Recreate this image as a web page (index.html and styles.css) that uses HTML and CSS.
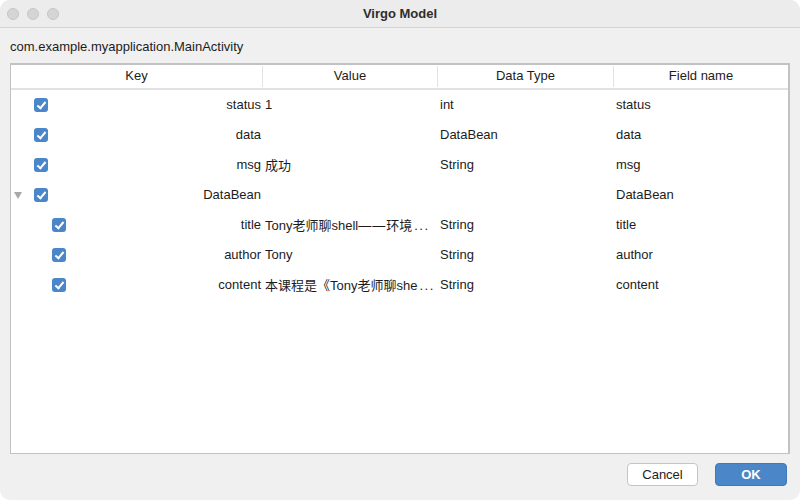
FILE: index.html
```html
<!DOCTYPE html>
<html>
<head>
<meta charset="utf-8">
<link rel="stylesheet" href="styles.css">
</head>
<body>
<div class="window">
  <div class="titlebar">
    <div class="lights"><span class="light"></span><span class="light"></span><span class="light"></span></div>
    <div class="title">Virgo Model</div>
  </div>
  <div class="content">
    <div class="label">com.example.myapplication.MainActivity</div>
    <div class="table">
      <div class="row head">
        <div class="hc">Key</div>
        <div class="hc sep">Value</div>
        <div class="hc sep">Data Type</div>
        <div class="hc sep">Field name</div>
      </div>
      <div class="row">
        <div class="key"><span class="cb"></span><span class="kname">status</span></div>
        <div class="cell">1</div><div class="cell type">int</div><div class="cell field">status</div>
      </div>
      <div class="row">
        <div class="key"><span class="cb"></span><span class="kname">data</span></div>
        <div class="cell"></div><div class="cell type">DataBean</div><div class="cell field">data</div>
      </div>
      <div class="row">
        <div class="key"><span class="cb"></span><span class="kname">msg</span></div>
        <div class="cell">成功</div><div class="cell type">String</div><div class="cell field">msg</div>
      </div>
      <div class="row">
        <div class="key"><span class="arrow"></span><span class="cb"></span><span class="kname">DataBean</span></div>
        <div class="cell"></div><div class="cell type"></div><div class="cell field">DataBean</div>
      </div>
      <div class="row">
        <div class="key nested"><span class="cb"></span><span class="kname">title</span></div>
        <div class="cell">Tony老师聊shell<span class="dash">——</span>环境<span class="ell">...</span></div><div class="cell type">String</div><div class="cell field">title</div>
      </div>
      <div class="row">
        <div class="key nested"><span class="cb"></span><span class="kname">author</span></div>
        <div class="cell">Tony</div><div class="cell type">String</div><div class="cell field">author</div>
      </div>
      <div class="row">
        <div class="key nested"><span class="cb"></span><span class="kname">content</span></div>
        <div class="cell">本课程是《Tony老师聊she<span class="ell">...</span></div><div class="cell type">String</div><div class="cell field">content</div>
      </div>
    </div>
    <div class="footer">
      <button class="btn cancel">Cancel</button>
      <button class="btn ok">OK</button>
    </div>
  </div>
</div>
</body>
</html>
```

FILE: styles.css
```css
* { box-sizing: border-box; }
html, body { margin: 0; padding: 0; background: #ffffff; }
body {
  font-family: "Liberation Sans", Arial, "Noto Sans CJK SC", sans-serif;
  font-size: 13px;
  color: #1c1c1c;
}
.window {
  width: 800px;
  height: 500px;
  background: #f0f0f0;
  border-radius: 10px;
  overflow: hidden;
  display: flex;
  flex-direction: column;
}
.titlebar {
  height: 28px;
  background: #ececec;
  border-bottom: 1px solid #d4d4d4;
  position: relative;
  display: flex;
  align-items: center;
  justify-content: center;
  flex-shrink: 0;
}
.lights {
  position: absolute;
  left: 7px;
  top: 8px;
  display: flex;
  gap: 8px;
}
.light {
  width: 12px;
  height: 12px;
  border-radius: 50%;
  background: #d5d5d5;
  border: 1px solid #c6c6c6;
}
.title {
  font-weight: bold;
  font-size: 13px;
  color: #2e2e2e;
  margin-top: -1px;
}
.content {
  flex: 1;
  display: flex;
  flex-direction: column;
  padding: 0 10px 0 10px;
}
.label {
  height: 35px;
  padding-top: 11px;
  line-height: 15px;
  color: #1c1c1c;
}
.table {
  height: 391px;
  background: #ffffff;
  border: 1px solid #c2c2c2;
  border-right-width: 2px;
  border-top-width: 2px;
  display: flex;
  flex-direction: column;
}
.row {
  display: grid;
  grid-template-columns: 251px 175px 176px 1fr;
  height: 30px;
  padding-bottom: 2px;
  align-items: center;
}
.row.head {
  height: 25px;
  padding-bottom: 0;
  border-bottom: 2px solid #e2e2e2;
  align-items: stretch;
}
.hc {
  display: flex;
  align-items: center;
  justify-content: center;
  color: #1c1c1c;
  margin: 1px 0 1px 0;
  padding-bottom: 2px;
}
.hc.sep { border-left: 1px solid #e3e3e3; }
.key {
  position: relative;
  display: flex;
  align-items: center;
  height: 100%;
  padding-left: 23px;
  padding-right: 1px;
}
.key.nested { padding-left: 41px; }
.kname { margin-left: auto; }
.cb {
  width: 14px;
  height: 14px;
  border-radius: 3px;
  background: #4a86c8;
  position: relative;
  flex-shrink: 0;
  margin-top: 2px;
}
.cb::after {
  content: "";
  position: absolute;
  left: 4.5px;
  top: 2px;
  width: 3px;
  height: 7px;
  border-right: 2px solid #ffffff;
  border-bottom: 2px solid #ffffff;
  transform: rotate(40deg);
}
.arrow {
  position: absolute;
  left: 3px;
  top: 12px;
  width: 0;
  height: 0;
  border-left: 4px solid transparent;
  border-right: 4px solid transparent;
  border-top: 7px solid #a8a8a8;
}
.cell {
  padding: 0 3px 0 3px;
  white-space: nowrap;
}
.dash { letter-spacing: 1px; }
.ell { letter-spacing: 1.5px; margin-left: 2px; }
.footer {
  display: flex;
  justify-content: flex-end;
  gap: 17px;
  padding: 9px 3px 0 0;
}
.btn {
  width: 71px;
  height: 23px;
  border-radius: 4px;
  font-family: "Liberation Sans", Arial, sans-serif;
  font-size: 13px;
  padding: 0;
}
.cancel {
  background: #ffffff;
  border: 1px solid #c4c4c4;
  color: #1c1c1c;
}
.ok {
  width: 72px;
  background: #4a86c8;
  border: 1px solid #4079bb;
  color: #ffffff;
  font-weight: bold;
}
```
